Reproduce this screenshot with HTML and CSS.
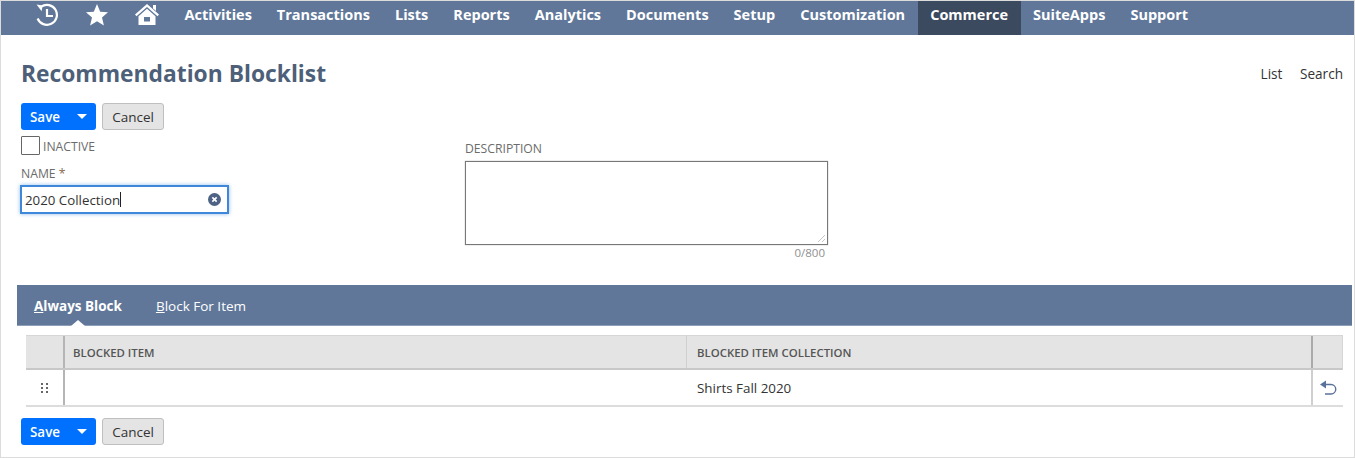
FILE: index.html
```html
<!DOCTYPE html>
<html lang="en">
<head>
<meta charset="utf-8">
<title>Recommendation Blocklist</title>
<link rel="stylesheet" href="styles.css">
</head>
<body>
<div class="frame">
  <nav class="nav">
    <div class="nav-icons">
      <svg class="ic-clock" width="24" height="24" viewBox="0 0 24 24" fill="none" stroke="#fff" stroke-width="2.2"><path d="M6.2 3.6A10 10 0 1 1 2.600 15.500"/><path d="M1.600 1.500 7.600 2.400 6.600 8.200" fill="#fff" stroke="none"/><path d="M12 6v7h6"/></svg>
      <svg class="ic-star" width="24" height="24" viewBox="0 0 24 24" fill="#fff"><path d="M12 1l3.200 7.700 7.800.6-6 5.200 1.900 8L12 18.200l-6.900 4.300 1.900-8-6-5.200 7.800-.6z"/></svg>
      <svg class="ic-home" width="26" height="24" viewBox="0 0 26 24" fill="#fff"><path d="M1 12.500 13 2l12 10.500-1.500 1.700L13 5 2.500 14.200z"/><path d="M19 3h3v6l-3-2.600z"/><path fill-rule="evenodd" d="M4.500 14.200 13 6.800l8.500 7.400V23h-17zM10 15v4.500h6V15z"/></svg>
    </div>
    <a class="nav-item">Activities</a>
    <a class="nav-item">Transactions</a>
    <a class="nav-item">Lists</a>
    <a class="nav-item">Reports</a>
    <a class="nav-item">Analytics</a>
    <a class="nav-item">Documents</a>
    <a class="nav-item">Setup</a>
    <a class="nav-item">Customization</a>
    <a class="nav-item active">Commerce</a>
    <a class="nav-item">SuiteApps</a>
    <a class="nav-item">Support</a>
  </nav>

  <header class="title-row">
    <h1>Recommendation Blocklist</h1>
    <div class="title-links"><a>List</a><a>Search</a></div>
  </header>

  <div class="buttons top">
    <div class="save"><span class="save-label">Save</span><span class="caret"></span></div>
    <button class="cancel" type="button">Cancel</button>
  </div>

  <section class="form">
    <div class="col-left">
      <div class="check-row"><span class="checkbox"></span><span class="label check-label">INACTIVE</span></div>
      <div class="label name-label">NAME <span class="req">*</span></div>
      <div class="input">
        <span class="value">2020 Collection</span><span class="cursor"></span>
        <svg class="clear" width="13" height="13" viewBox="0 0 12 12"><circle cx="6" cy="6" r="6" fill="#4d6284"/><path d="M4 4l4 4M8 4l-4 4" stroke="#fff" stroke-width="1.500"/></svg>
      </div>
    </div>
    <div class="col-right">
      <div class="label desc-label">DESCRIPTION</div>
      <div class="textarea">
        <svg class="grip" width="7" height="7" viewBox="0 0 7 7" stroke="#c8c8c8" stroke-width="1"><path d="M0 7 7 0M4 7 7 4"/></svg>
      </div>
      <div class="counter">0/800</div>
    </div>
  </section>

  <div class="tabs">
    <a class="tab active"><u>A</u>lways Block</a>
    <a class="tab"><u>B</u>lock For Item</a>
  </div>

  <div class="grid">
    <div class="row head">
      <div class="cell c-drag"></div>
      <div class="cell c-item">BLOCKED ITEM</div>
      <div class="cell c-coll">BLOCKED ITEM COLLECTION</div>
      <div class="cell c-act"></div>
    </div>
    <div class="row body">
      <div class="cell c-drag">
        <svg width="7" height="10" viewBox="0 0 7 10" fill="#666"><rect width="2" height="2"/><rect x="5" width="2" height="2"/><rect y="4" width="2" height="2"/><rect x="5" y="4" width="2" height="2"/><rect y="8" width="2" height="2"/><rect x="5" y="8" width="2" height="2"/></svg>
      </div>
      <div class="cell c-item"></div>
      <div class="cell c-coll">Shirts Fall 2020</div>
      <div class="cell c-act">
        <svg width="18" height="16" viewBox="0 0 18 16" fill="none"><path d="M1 4.500 7 .5v8z" fill="#5a7299"/><path d="M6 4.500h6a4.500 4.500 0 0 1 0 9.500H6" stroke="#5a7299" stroke-width="1.400"/></svg>
      </div>
    </div>
  </div>

  <div class="buttons bottom">
    <div class="save"><span class="save-label">Save</span><span class="caret"></span></div>
    <button class="cancel" type="button">Cancel</button>
  </div>
</div>
</body>
</html>
```
FILE: styles.css
```css
* { box-sizing: border-box; }
html, body { margin: 0; padding: 0; }
body { background: #fff; font-family: "Open Sans", "Liberation Sans", sans-serif; color: #333; }
.frame { width: 1355px; height: 458px; border: 1px solid #dcdcdc; overflow: hidden; background: #fff; }

.nav { display: flex; align-items: stretch; height: 34px; background: #607799; }
.nav-icons { display: flex; align-items: center; width: 171px; padding-left: 34px; }
.ic-clock { margin-right: 26px; margin-top: -6px; }
.ic-star { margin-right: 25px; margin-top: -7px; }
.ic-home { margin-top: -9px; }
.nav-item { display: flex; align-items: center; padding: 0 12.500px 7px; font-size: 14.500px; font-weight: 700; color: #fff; }
.nav-item.active { background: #3c4a60; }

.title-row { display: flex; justify-content: space-between; align-items: center; height: 50px; padding: 28px 11px 0 20px; }
h1 { margin: 0; font-size: 22.800px; font-weight: 700; color: #4d5f79; line-height: 26px; }
.title-links { display: flex; gap: 17.500px; padding-bottom: 2px; font-size: 13.600px; font-weight: 500; color: #333; }

.buttons { display: flex; gap: 6px; margin-left: 20px; }
.buttons.top { margin-top: 18px; }
.buttons.bottom { margin-top: 11px; }
.save { display: flex; align-items: center; width: 75px; height: 27px; background: #0070ff; border-radius: 3px; color: #fff; font-size: 13.400px; font-weight: 600; }
.save-label { padding-left: 9px; width: 55px; }
.caret { width: 0; height: 0; border-left: 5px solid transparent; border-right: 5px solid transparent; border-top: 5px solid #fff; margin-left: 1px; }
.cancel { width: 62px; height: 27px; padding: 0; background: #e4e4e4; border: 1px solid #bfbfbf; border-radius: 3px; color: #333; font: 500 13.500px "Open Sans", sans-serif; }

.form { display: flex; }
.col-left { width: 464px; padding-left: 20px; }
.label { font-size: 12.200px; color: #6b6b6b; line-height: 16px; }
.check-row { display: flex; align-items: center; gap: 3px; margin-top: 6px; height: 19px; }
.check-label { padding-top: 2px; }
.checkbox { width: 19px; height: 19px; border: 1px solid #666; border-radius: 1px; background: #fff; }
.name-label { margin-top: 11px; }
.req { color: #8a6a55; }
.input { display: flex; align-items: center; width: 209px; height: 29px; margin: 3px 0 0 -1px; padding: 0 3px; border: 2px solid #3f87d8; box-shadow: 0 0 4px #8fbbe8; font-size: 13.300px; color: #333; }
.cursor { width: 1px; height: 15px; background: #222; }
.clear { margin-left: auto; margin-right: 3px; }
.col-right { width: 363px; padding-top: 11px; }
.textarea { display: flex; align-items: flex-end; justify-content: flex-end; height: 84px; margin-top: 4px; padding: 2px; border: 1px solid #777; box-shadow: 0 0 1px #999; }
.counter { text-align: right; padding-right: 3px; font-size: 11.500px; line-height: 16px; color: #8f8f8f; }

.tabs { display: flex; gap: 34px; height: 41px; margin: 24px 2px 0 16px; padding: 2px 17px 0; background: #607799; border-bottom: 1px solid #8ea0b8; }
.tab { font-size: 13.500px; color: #fff; position: relative; line-height: 38px; }
.tab.active { font-weight: 700; }
.tab.active::after { content: ""; position: absolute; left: 50%; bottom: -1px; margin-left: -7px; border-left: 7px solid transparent; border-right: 7px solid transparent; border-bottom: 6px solid #fff; }

.grid { margin: 9px 11px 0 25px; }
.row { display: flex; }
.head { height: 35px; background: #e4e4e4; border: 1px solid #d6d6d6; border-bottom: 2px solid #c8c8c8; border-left: 0; font-size: 11.400px; font-weight: 600; color: #555; }
.body { height: 37px; border-bottom: 2px solid #dcdcdc; font-size: 13.400px; color: #333; }
.cell { display: flex; align-items: center; }
.c-drag { width: 39px; justify-content: center; border-right: 2px solid #b5b5b5; }
.c-item { width: 622px; padding-left: 8px; border-right: 1px solid #d0d0d0; }
.body .c-item { border-right: 0; }
.c-coll { width: 626px; padding-left: 10px; border-right: 2px solid #aaa; }
.body .c-coll { border-right: 2px solid #cfcfcf; }
.c-act { flex: 1; justify-content: center; }
```
